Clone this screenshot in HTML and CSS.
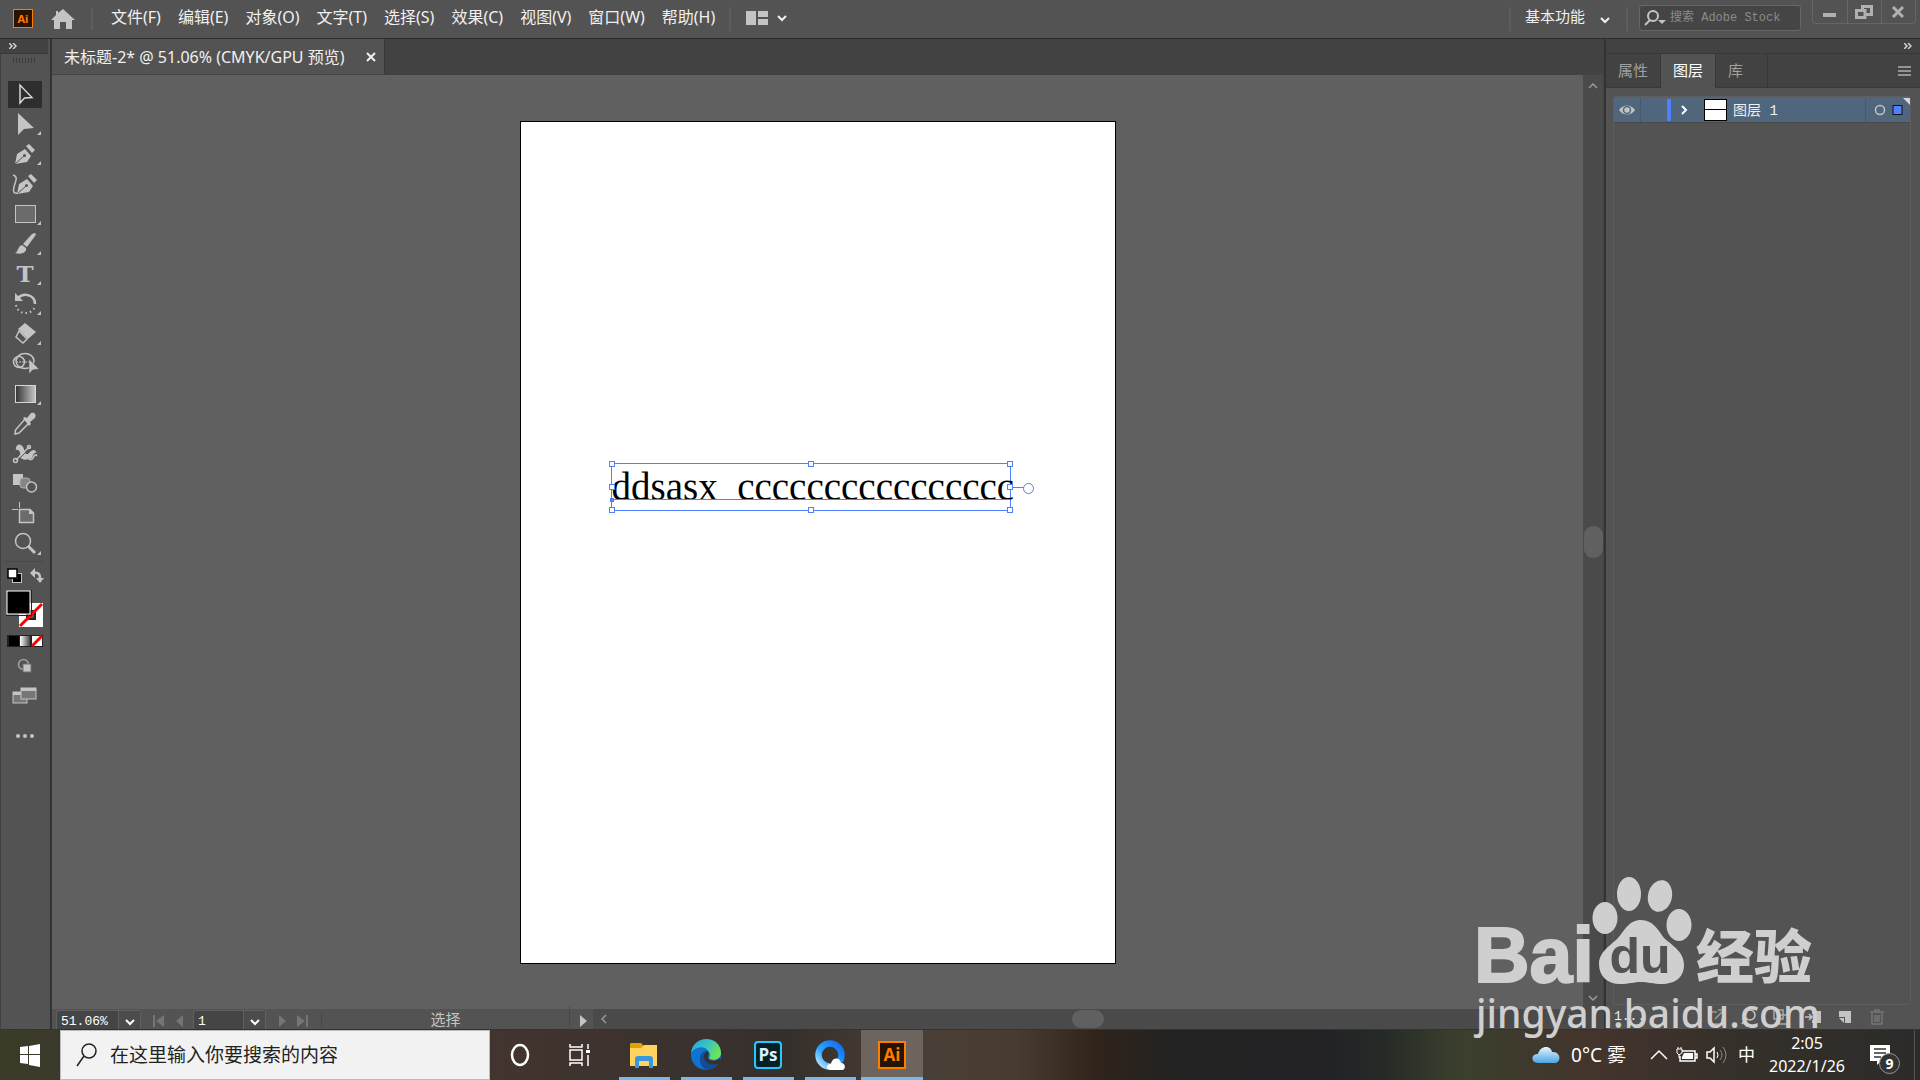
FILE: index.html
```html
<!DOCTYPE html>
<html lang="zh-CN">
<head>
    <meta charset="UTF-8">
    <meta name="viewport" content="width=device-width, initial-scale=1.0">
    <title>未标题-2</title>
    <link rel="stylesheet" href="styles.css">
</head>
<body>

    <header class="menuBar">
        <span class="aiLogo">Ai</span>
        <button class="home" aria-label="主页">
            <svg width="24" height="22"><path d="M12 1L24 12H21V21H15V14H9V21H3V12H0L5 7V3H7V5Z" fill="#c4c4c4"/></svg>
        </button>
        <nav class="menu">
            <button>文件(F)</button>
            <button>编辑(E)</button>
            <button>对象(O)</button>
            <button>文字(T)</button>
            <button>选择(S)</button>
            <button>效果(C)</button>
            <button>视图(V)</button>
            <button>窗口(W)</button>
            <button>帮助(H)</button>
        </nav>
        <button class="arrange" aria-label="排列文档">
            <svg width="42" height="16"><path d="M0 1H10V15H0ZM12 1H22V7H12ZM12 9H22V15H12Z" fill="#c4c4c4"/><path d="M32 6L36 10L40 6" fill="none" stroke="#f0f0f0" stroke-width="2"/></svg>
        </button>
        <label class="workspace">
            <select aria-label="工作区"><option>基本功能</option></select>
            <svg width="12" height="12"><path d="M2 5L6 9L10 5" fill="none" stroke="#f0f0f0" stroke-width="2"/></svg>
        </label>
        <label class="stock">
            <svg width="22" height="16"><circle cx="9" cy="6" r="5" fill="none" stroke="#c4c4c4" stroke-width="2"/><path d="M6 10L1 15" stroke="#c4c4c4" stroke-width="2"/><path d="M14 10H22L18 14Z" fill="#c4c4c4"/></svg>
            <input type="text" placeholder="搜索 Adobe Stock" aria-label="搜索 Adobe Stock">
        </label>
        <div class="winCtrl">
            <button aria-label="最小化"><svg width="18" height="16"><path d="M3 9H16V13H3Z" fill="#b0b0b0"/></svg></button>
            <button aria-label="还原"><svg width="18" height="16"><path d="M7.500 2.500H16.500V10.500H7.500Z" fill="none" stroke="#b0b0b0" stroke-width="3"/><path d="M1.500 6.500H10V13.500H1.500Z" fill="#535353" stroke="#b0b0b0" stroke-width="3"/></svg></button>
            <button aria-label="关闭"><svg width="18" height="16"><path d="M4 3L14 13M14 3L4 13" stroke="#b0b0b0" stroke-width="3"/></svg></button>
        </div>
    </header>

    <main class="workArea">
        <aside class="tools">
            <div class="panelTop"><svg width="8" height="6"><path d="M0 0L3 3L0 6M4 0L7 3L4 6" fill="none" stroke="#d0d0d0" stroke-width="1.500"/></svg></div>
            <div class="grip"></div>
            <button class="tool active" aria-label="选择工具"><svg width="40" height="30"><path d="M15 6V24L19.500 19L27 18.500Z" fill="none" stroke="#d6d6d6" stroke-width="1.500"/></svg></button>
            <button class="tool" aria-label="直接选择工具"><svg width="40" height="30"><path d="M13 4V26L19 20L29 19Z"/><path class="more" d="M32 26H36V22Z"/></svg></button>
            <button class="tool" aria-label="钢笔工具"><svg width="40" height="30"><path d="M10 25L12 15L20 10L26 17L22 23Z"/><path d="M21 7L24 5L30 11L27 14Z"/><path d="M10 25L19 17" stroke="#535353"/><circle cx="19.500" cy="16.500" r="1.500" fill="#535353"/><path class="more" d="M32 26H36V22Z"/></svg></button>
            <button class="tool" aria-label="曲率工具"><svg width="40" height="30"><path d="M12 25L14 15L22 10L28 17L24 23Z"/><path d="M23 7L26 5L32 11L29 14Z"/><path d="M12 25L21 17" stroke="#535353"/><circle cx="21.500" cy="16.500" r="1.500" fill="#535353"/><path class="ln" d="M8 6C14 8 10 13 9 18C8 22 8 25 13 24"/></svg></button>
            <button class="tool" aria-label="矩形工具"><svg width="40" height="30"><rect x="10.500" y="6.500" width="20" height="17" fill="#6c6c6c" stroke="#c4c4c4"/><path class="more" d="M32 26H36V22Z"/></svg></button>
            <button class="tool" aria-label="画笔工具"><svg width="40" height="30"><path d="M30 4C31 5 31 6 30 7L22 18L18 15L27 5Z"/><path d="M17 16L21 19C22 23 17 26 10 24C14 22 12 18 17 16Z"/><path class="more" d="M32 26H36V22Z"/></svg></button>
            <button class="tool" aria-label="文字工具"><svg width="40" height="30"><text x="20" y="23" text-anchor="middle" class="typeT">T</text><path class="more" d="M32 26H36V22Z"/></svg></button>
            <button class="tool" aria-label="旋转工具"><svg width="40" height="30"><path d="M13 9C19 3 30 6 30 15" fill="none" stroke="#c4c4c4" stroke-width="2.500"/><path d="M10 4L18 12H10Z"/><path d="M11 16C13 27 28 26 30 17" fill="none" stroke="#c4c4c4" stroke-width="2" stroke-dasharray="1.500 3"/><path class="more" d="M32 26H36V22Z"/></svg></button>
            <button class="tool" aria-label="橡皮擦工具"><svg width="40" height="30"><path d="M20 4L31 13L23 20L13 10Z"/><path class="ln" d="M14 12L22 20L18 24L11 18Z"/><path class="more" d="M32 26H36V22Z"/></svg></button>
            <button class="tool" aria-label="形状生成器工具"><svg width="40" height="30"><circle class="ln" cx="14" cy="13" r="5.500"/><ellipse class="ln" cx="20" cy="12" rx="9" ry="7.500"/><path d="M11 13H24" stroke="#c4c4c4" stroke-dasharray="2 1"/><path d="M24 10V25L27.500 21L34 20Z" stroke="#535353" stroke-width=".5"/></svg></button>
            <button class="tool" aria-label="渐变工具"><svg width="40" height="30"><defs><linearGradient id="gr"><stop offset="0" stop-color="#333"/><stop offset="1" stop-color="#c8c8c8"/></linearGradient></defs><rect x="10.500" y="6.500" width="20" height="17" fill="url(#gr)" stroke="#d6d6d6"/><path class="more" d="M32 26H36V22Z"/></svg></button>
            <button class="tool" aria-label="吸管工具"><svg width="40" height="30"><path class="ln" d="M20 10L24 14L14 24L10 25L10.500 21Z"/><path d="M18 9L20 8L22 9L26 4C29 3 32 5 30 9L25 13L26 15L24 17Z"/></svg></button>
            <button class="tool" aria-label="操控变形工具"><svg width="40" height="30"><path d="M11 11C10 6 15 3 18 8C20 12 20 16 23 15C26 12 29 8 32 14C29 12 28 17 27 19C22 21 17 22 14 17C17 16 14 9 11 11Z"/><path class="ln" d="M11 21L24 8"/><circle class="ln" cx="10.500" cy="21.500" r="2"/><circle class="ln" cx="24" cy="8" r="1.500"/><path d="M15 19L23 11" stroke="#535353"/><path class="ln" d="M24 20C29 23 29 12 32 17"/></svg></button>
            <button class="tool" aria-label="混合工具"><svg width="40" height="30"><path d="M8 5H18V16H8Z"/><rect x="15" y="9" width="10" height="10" rx="3" fill="#858585" stroke="#b0b0b0"/><circle cx="26.500" cy="18" r="5" fill="#535353" stroke="#c4c4c4" stroke-width="1.500"/></svg></button>
            <button class="tool" aria-label="画板工具"><svg width="40" height="30"><path d="M14.500 10.500H25L28.500 14V23.500H14.500Z" fill="#6c6c6c" stroke="#c4c4c4" stroke-width="1.500"/><path d="M24 10V15H29Z"/><path d="M7 10.500H13M14.500 3V9" stroke="#c4c4c4"/></svg></button>
            <button class="tool" aria-label="缩放工具"><svg width="40" height="30"><circle cx="18" cy="12" r="7.500" fill="none" stroke="#c4c4c4" stroke-width="1.500"/><path d="M23 17L30 24" stroke="#c4c4c4" stroke-width="3"/><path class="more" d="M32 26H36V22Z"/></svg></button>

            <div class="swapRow">
                <button aria-label="默认填色和描边"><svg width="16" height="16"><rect x="5.500" y="5.500" width="9" height="9" fill="none" stroke="#c4c4c4" stroke-width="1"/><rect x="7.500" y="7.500" width="5" height="5" fill="none" stroke="#000" stroke-width="3"/><rect x="1" y="1" width="9" height="9" fill="#fff" stroke="#000" stroke-width="1.500"/></svg></button>
                <button aria-label="互换填色和描边"><svg width="16" height="16"><path d="M5 5C11 4 11 8 11 11" fill="none" stroke="#c4c4c4" stroke-width="2.500"/><path d="M6 0V10L1 5ZM7 10H15L11 15Z"/></svg></button>
            </div>
            <button class="fillStroke" aria-label="填色和描边">
                <svg width="38" height="38"><path d="M13 13H37V37H13Z" fill="#fff"/><path d="M21 21H29V29H21Z" fill="#535353" stroke="#222" stroke-width="2"/><path d="M14 36L36 14" stroke="#f00" stroke-width="3"/><rect x="1" y="1" width="23" height="23" fill="#000" stroke="#fff"/><path d="M0 25.500H25.500V0" fill="none" stroke="#222"/></svg>
            </button>
            <button class="paintKind" aria-label="颜色类型">
                <svg width="36" height="12"><defs><linearGradient id="wb"><stop offset="0" stop-color="#fff"/><stop offset="1" stop-color="#444"/></linearGradient></defs><path d="M0 0H36V12H0Z" fill="#222"/><path d="M2 1H12V11H2Z" fill="#000"/><path d="M13 1H23V11H13Z" fill="url(#wb)"/><path d="M25 1H35V11H25Z" fill="#fff"/><path d="M25 11L35 1" stroke="#f00" stroke-width="3"/></svg>
            </button>
            <button class="small" aria-label="绘图模式"><svg width="16" height="16"><circle cx="6.500" cy="6.500" r="5" fill="none" stroke="#a0a0a0" stroke-width="1.500"/><path d="M6 6H14V14H6Z" stroke="#707070"/></svg></button>
            <button class="small" aria-label="屏幕模式"><svg width="26" height="18"><rect x="1" y="5" width="14" height="11" fill="#777" stroke="#c4c4c4"/><rect x="9" y="1" width="15" height="11" fill="#777" stroke="#c4c4c4"/><path d="M9 1H24V4H9ZM1 5H9V8H1Z"/></svg></button>
            <button class="small dots" aria-label="编辑工具栏"><svg width="18" height="4"><circle cx="2" cy="2" r="2"/><circle cx="9" cy="2" r="2"/><circle cx="16" cy="2" r="2"/></svg></button>
        </aside>

        <section class="doc">
            <div class="tabs">
                <div class="docTab">
                    <span>未标题-2* @ 51.06% (CMYK/GPU 预览)</span>
                    <button aria-label="关闭文档"><svg width="10" height="10"><path d="M1 1L9 9M9 1L1 9" stroke="#f0f0f0" stroke-width="2"/></svg></button>
                </div>
            </div>
            <div class="view">
                <div class="canvas">
                    <div class="artboard">
                        <div class="textObj">
                            ddsasx&nbsp; cccccccccccccccc
                            <i class="handle tl"></i><i class="handle tc"></i><i class="handle tr"></i>
                            <i class="handle ml"></i><i class="handle mr"></i>
                            <i class="handle bl"></i><i class="handle bc"></i><i class="handle br"></i>
                            <i class="baseline"></i>
                            <i class="outPort"></i>
                        </div>
                    </div>
                </div>
                <div class="vScroll">
                    <svg width="10" height="6"><path d="M1 5L5 1L9 5"/></svg>
                    <span class="thumb"></span>
                    <svg width="10" height="6"><path d="M1 1L5 5L9 1"/></svg>
                </div>
            </div>
            <div class="status">
                <label class="statBox zoomBox">
                    <select aria-label="缩放"><option>51.06%</option></select>
                    <svg width="22" height="18"><path d="M7 9L11 13L15 9"/></svg>
                </label>
                <button class="nav first" aria-label="首项"><svg width="34" height="12"><path d="M0 0H2V12H0ZM11 0V12L3 6ZM30 0V12L23 6Z"/></svg></button>
                <label class="statBox pageBox">
                    <select aria-label="画板导航"><option>1</option></select>
                    <svg width="22" height="18"><path d="M7 9L11 13L15 9"/></svg>
                </label>
                <button class="nav last" aria-label="末项"><svg width="34" height="12"><path d="M1 0V12L8 6ZM19 0V12L27 6ZM28 0H30V12H28Z"/></svg></button>
                <span class="curTool">选择</span>
                <button class="play" aria-label="状态菜单"><svg width="8" height="12"><path d="M0 0V12L7 6Z"/></svg></button>
                <div class="hScroll">
                    <svg width="6" height="10"><path d="M5 1L1 5L5 9"/></svg>
                    <span class="thumb"></span>
                    <svg width="6" height="10"><path d="M1 1L5 5L1 9"/></svg>
                </div>
            </div>
        </section>

        <aside class="panel">
            <div class="panelTop right"><svg width="8" height="6"><path d="M0 0L3 3L0 6M4 0L7 3L4 6" fill="none" stroke="#d0d0d0" stroke-width="1.500"/></svg></div>
            <div class="panelTabs">
                <button>属性</button>
                <button class="on">图层</button>
                <button>库</button>
                <button class="burger" aria-label="面板菜单"><svg width="13" height="12"><path d="M0 2H13M0 6H13M0 10H13" stroke="#b0b0b0" stroke-width="1.500"/></svg></button>
            </div>
            <div class="layers">
                <div class="layer">
                    <svg class="eye" width="26" height="24"><path d="M5 12C9 6 17 6 21 12C17 18 9 18 5 12Z" fill="#c4c4c4"/><circle cx="13" cy="12" r="3.500" fill="#c4c4c4" stroke="#50667c" stroke-width="1.500"/></svg>
                    <span class="lock"></span>
                    <span class="color"></span>
                    <svg class="expand" width="33" height="24"><path d="M11 8L15 12L11 16" fill="none" stroke="#fff" stroke-width="2"/></svg>
                    <span class="preview"></span>
                    <span class="name">图层 1</span>
                    <svg class="target" width="45" height="24"><circle cx="14" cy="12" r="4.500" fill="none" stroke="#c4c4c4" stroke-width="1.500"/><rect x="27" y="7.500" width="9" height="9" fill="#4f80ff" stroke="#111"/><path d="M37 0H45V8Z" fill="#d8d8d8"/></svg>
                </div>
            </div>
            <div class="panelFoot">
                <span>1...</span>
                <button aria-label="收集以导出"><svg width="16" height="16"><path d="M8 3H1V15H13V9M6 10L14 2M9 1H15V7" fill="none" stroke="#999" stroke-width="1.500"/></svg></button>
                <button aria-label="定位对象"><svg width="16" height="16"><circle cx="9" cy="6" r="5" fill="none" stroke="#c4c4c4" stroke-width="1.500"/><path d="M5 10L1 15" stroke="#c4c4c4" stroke-width="2"/></svg></button>
                <button aria-label="剪切蒙版"><svg width="16" height="16"><path d="M1 1H10V10H1ZM6 6H15V15H6Z" fill="none" stroke="#aaa" stroke-width="1.500"/></svg></button>
                <button aria-label="新建子图层"><svg width="16" height="16"><path d="M7 2H16V14H7V11H10V5H7Z"/><path d="M0 8H7M4 5L7 8L4 11" fill="none" stroke="#c4c4c4" stroke-width="1.500"/></svg></button>
                <button aria-label="新建图层"><svg width="16" height="16"><path d="M2 2H14V14H8V8H2ZM2 9H7V14Z"/></svg></button>
                <button aria-label="删除"><svg width="16" height="16"><path d="M1 3H15M6 3V1H10V3M3 4V15H13V4M6 6V13M8 6V13M10 6V13" fill="none" stroke="#757575" stroke-width="1.500"/></svg></button>
            </div>
        </aside>
    </main>

    <footer class="taskbar">
        <button class="start" aria-label="开始"><svg width="20" height="24"><path d="M0 4L8 3V11H0ZM9 3L20 1V11H9ZM0 12H8V21L0 20ZM9 12H20V24L9 22Z" fill="#fff"/></svg></button>
        <label class="winSearch">
            <svg width="22" height="26"><circle cx="13" cy="9" r="7" fill="none" stroke="#222" stroke-width="1.500"/><path d="M8 14L1 24" stroke="#222" stroke-width="1.500"/></svg>
            <input type="text" placeholder="在这里输入你要搜索的内容" aria-label="在这里输入你要搜索的内容">
        </label>
        <div class="pinned">
            <button aria-label="Cortana"><svg width="20" height="24"><ellipse cx="10" cy="12" rx="8" ry="10" fill="none" stroke="#fff" stroke-width="2.500"/></svg></button>
            <button aria-label="任务视图"><svg width="22" height="24"><path d="M1 1V4H13V1M1 23V20H13V23M1 7H13V17H1ZM19 1V6M19 12V23" fill="none" stroke="#fff" stroke-width="1.500"/><path d="M17 7H21V10H17Z" fill="#fff"/></svg></button>
        </div>
        <button class="app" aria-label="文件资源管理器"><svg width="32" height="32"><path d="M2 5Q2 4 3 4H13L15 6V9H2Z" fill="#e2a000"/><path d="M2 9H13L16 6H29V27H2Z" fill="#ffd35c"/><path d="M7 29V20Q7 17 10 17H22Q25 17 25 20V29H21V22H11V29Z" fill="#3a97dd"/></svg></button>
        <button class="app" aria-label="Edge"><svg width="32" height="34"><defs><linearGradient id="eg" x1="0" y1="0" x2="1" y2=".5"><stop offset="0" stop-color="#2aa5e0"/><stop offset=".5" stop-color="#35c1c8"/><stop offset="1" stop-color="#6be35a"/></linearGradient></defs><circle cx="16" cy="17" r="15" fill="#1173d0"/><path d="M1 15C2 6 9 1 16 1C25 1 31 7 31 15C31 21 25 23 19 21C21 18 20 13 15 10C10 8 4 10 1 15Z" fill="url(#eg)"/><path d="M10 21C10 16 13 13 17 13C21 15 17 18 18 21C20 24 26 24 29 22C28 26 24 31 18 32C12 31 10 26 10 21Z" fill="#124d98"/><path d="M17 13C20 15 17 18 18 20C21 24 27 23 30 20L30 25C22 29 13 25 14 17Z" fill="#37312d"/></svg></button>
        <button class="app" aria-label="Photoshop"><span class="psIcon">Ps</span></button>
        <button class="app" aria-label="QQ浏览器"><svg width="32" height="32"><defs><linearGradient id="qq" x1="0" y1="1" x2="1" y2="0"><stop offset="0" stop-color="#bfe8ff"/><stop offset=".4" stop-color="#2da4ff"/><stop offset="1" stop-color="#116cf0"/></linearGradient></defs><circle cx="16" cy="16" r="11.500" fill="none" stroke="url(#qq)" stroke-width="6.500"/><path d="M17 31C11 31 12 24 17 25C18 18 26 18 27 24C32 24 32 31 28 31Z" fill="#fff"/></svg></button>
        <button class="app current" aria-label="Illustrator"><span class="aiIcon">Ai</span></button>

        <div class="tray">
            <button class="weather">
                <svg width="28" height="20"><defs><linearGradient id="cl" x1="0" y1="0" x2="0" y2="1"><stop offset="0" stop-color="#e4f4ff"/><stop offset="1" stop-color="#4ea6e4"/></linearGradient></defs><path d="M6 18C-2 18 -1 8 6 9C8 0 19 0 20 7C29 6 30 18 22 18Z" fill="url(#cl)"/></svg>
                <span>0°C 雾</span>
            </button>
            <button aria-label="显示隐藏的图标"><svg width="18" height="12"><path d="M1 10L9 2L17 10" fill="none" stroke="#fff" stroke-width="1.500"/></svg></button>
            <button aria-label="电池"><svg width="22" height="18"><path d="M6 5H19V15H4V10M19 8H21V12H19" fill="none" stroke="#fff" stroke-width="1.500"/><path d="M8 7H17V13H6V11Z" fill="#fff"/><path d="M1 3H6V7L3 9L1 7ZM2 1V3M5 1V3M3 8V12" fill="none" stroke="#fff"/></svg></button>
            <button aria-label="音量"><svg width="22" height="18"><path d="M1 6H4L8 2V16L4 12H1Z" fill="none" stroke="#fff" stroke-width="1.500"/><path d="M11 6Q13 9 11 12" fill="none" stroke="#fff"/><path d="M14 4Q18 9 14 14M17 1Q23 9 17 17" fill="none" stroke="#8a8a8a"/></svg></button>
            <button class="ime">中</button>
            <button class="clock"><time>2:05</time><time>2022/1/26</time></button>
            <button class="notice" aria-label="通知"><svg width="22" height="22"><path d="M1 1H21V17H12L8 21V17H1Z" fill="#fff"/><path d="M5 5H17M5 9H17M5 13H12" stroke="#333" stroke-width="1.500"/></svg><span class="badge">9</span></button>
        </div>
    </footer>

    <!-- site mark over the corner -->
    <svg class="mark" width="360" height="176" viewBox="0 0 360 176">
        <g fill="#cfcfcf">
            <text x="2" y="112" class="markBai">Bai</text>
            <ellipse cx="133" cy="48" rx="12.500" ry="16"/>
            <ellipse cx="157" cy="24" rx="12" ry="17"/>
            <ellipse cx="188" cy="26" rx="12" ry="16" transform="rotate(12 188 26)"/>
            <ellipse cx="207" cy="55" rx="12.500" ry="16"/>
            <path d="M169 50C181 50 186 60 192 68C201 76 212 82 212 95C212 108 202 114 190 114C181 114 176 112 169 112C162 112 157 114 148 114C135 114 127 106 127 94C127 82 138 76 146 68C153 60 157 50 169 50Z"/>
            <text x="224" y="108" class="markCn">经验</text>
            <text x="4" y="158" class="markUrl">jingyan.baidu.com</text>
        </g>
        <text x="168" y="103" text-anchor="middle" class="markDu" fill="#535353">du</text>
    </svg>

</body>
</html>
```
FILE: styles.css
```css
* {
    box-sizing: border-box;
}
body {
    margin: 0;
    height: 100vh;
    display: flex;
    flex-direction: column;
    overflow: hidden;
    position: relative;
    background: #535353;
    color: #f0f0f0;
    font: 15px/20px "Noto Sans", "Noto Sans CJK SC", sans-serif;
}
button, select, input {
    margin: 0;
    padding: 0;
    border: 0;
    background: none;
    color: inherit;
    font: inherit;
    outline: none;
    -webkit-appearance: none;
    appearance: none;
}
svg {
    display: block;
    flex: none;
}

/* menu bar */
.menuBar {
    height: 39px;
    flex: none;
    display: flex;
    align-items: center;
    border-bottom: 1px solid #2c2c2c;
    padding: 0 4px 0 13px;
}
.aiLogo {
    width: 20px;
    height: 19px;
    margin-bottom: 2px;
    border: 1px solid #ff7c00;
    background: #2a1400;
    color: #ff7c00;
    font: bold 11px/17px "Open Sans", sans-serif;
    text-align: center;
}
.home {
    margin-left: 18px;
    padding-right: 16px;
    border-right: 2px solid #5e5e5e;
}
.menu {
    display: flex;
    gap: 17px;
    padding: 0 14px 4px 18px;
    border-right: 2px solid #5e5e5e;
    font-size: 16px;
}
.menu button {
    white-space: nowrap;
}
.arrange {
    margin: 0 auto 2px 15px;
}
.workspace {
    display: flex;
    align-items: center;
    gap: 13px;
    height: 24px;
    padding: 0 15px 0 14px;
    border: solid #5e5e5e;
    border-width: 0 2px;
}
.workspace select {
    padding-bottom: 6px;
}
.stock {
    width: 162px;
    height: 26px;
    margin: 0 11px 2px;
    display: flex;
    align-items: center;
    gap: 4px;
    padding-left: 4px;
    background: #454545;
    border: 1px solid #666;
    border-radius: 3px;
}
.stock input {
    flex: 1;
    min-width: 0;
    font: 12px/18px "Liberation Mono", "Noto Sans CJK SC", monospace;
}
.stock input::placeholder {
    color: #8b8b8b;
}
.winCtrl {
    display: flex;
    align-self: flex-start;
    border: 1px solid #666;
    border-top: 0;
    border-radius: 0 0 4px 4px;
}
.winCtrl button {
    width: 34px;
    height: 23px;
    padding-left: 7px;
}
.winCtrl button + button {
    border-left: 1px solid #666;
}

/* work area */
.workArea {
    flex: 1;
    min-height: 0;
    display: flex;
    border-bottom: 1px solid #333;
}
.panelTop {
    height: 15px;
    flex: none;
    align-self: stretch;
    padding: 4px 8px;
    background: #424242;
    border-bottom: 1px solid #383838;
}
.panelTop.right {
    display: flex;
    justify-content: flex-end;
}

/* tools */
.tools {
    width: 52px;
    flex: none;
    display: flex;
    flex-direction: column;
    align-items: center;
    padding-right: 2px;
    border-left: 1px solid #404040;
    border-right: 2px solid #333;
}
.grip {
    width: 24px;
    height: 5px;
    margin: 4px 0 16px;
    background: repeating-linear-gradient(90deg, #3a3a3a 0 1px, #535353 1px 3px);
}
.tools svg {
    fill: #c4c4c4;
}
.tools .ln {
    fill: none;
    stroke: #c4c4c4;
    stroke-width: 1.5px;
}
.tool {
    height: 30px;
}
.tool.active {
    background: linear-gradient(#2e2e2e, #2e2e2e) center / 34px 27px no-repeat;
}
.typeT {
    font: bold 23px "DejaVu Serif", serif;
}
.swapRow {
    width: 40px;
    height: 28px;
    display: flex;
    justify-content: space-between;
    align-items: center;
    margin-top: 2px;
    padding-left: 2px;
    border-top: 1px solid #4a4a4a;
}
.fillStroke {
    margin-top: 1px;
}
.paintKind {
    margin: 7px 0 4px;
}
.small {
    height: 30px;
}
.dots {
    margin-top: 10px;
}

/* document */
.doc {
    flex: 1;
    min-width: 0;
    display: flex;
    flex-direction: column;
}
.tabs {
    height: 36px;
    flex: none;
    display: flex;
    background: #424242;
}
.docTab {
    display: flex;
    align-items: center;
    gap: 21px;
    padding: 0 8px 0 12px;
    background: #535353;
    border-right: 1px solid #3a3a3a;
    border-bottom: 1px solid #444;
    font-size: 16px;
}
.view {
    flex: 1;
    min-height: 0;
    display: flex;
}
.canvas {
    flex: 1;
    display: flex;
    align-items: center;
    justify-content: center;
    background: #606060;
    overflow: hidden;
}
.artboard {
    width: 596px;
    height: 843px;
    flex: none;
    position: relative;
    background: #fff;
    border: 1px solid #000;
}
.vScroll {
    width: 21px;
    display: flex;
    flex-direction: column;
    align-items: center;
    justify-content: space-between;
    padding: 8px 0;
    background: #4a4a4a;
    border-right: 1px solid #444;
}
.vScroll svg, .hScroll svg {
    fill: none;
    stroke: #999;
    stroke-width: 1.5px;
}
.thumb {
    width: 19px;
    height: 32px;
    border-radius: 9px;
    background: #606060;
}

/* selected text object, placed freely on the artboard */
.textObj {
    position: absolute;
    left: 90px;
    top: 341px;
    width: 400px;
    height: 48px;
    border: 1px solid #4f80ff;
    color: #000;
    font: 39px/46px "Liberation Serif", serif;
    white-space: nowrap;
}
.handle {
    position: absolute;
    width: 6px;
    height: 6px;
    margin: -3px;
    background: #fff;
    border: 1px solid #4f80ff;
}
.tl, .tc, .tr { top: 0; }
.ml, .mr { top: 50%; }
.bl, .bc, .br { top: 100%; }
.tl, .ml, .bl { left: 0; }
.tc, .bc { left: 50%; }
.tr, .mr, .br { left: 100%; }
.baseline {
    position: absolute;
    left: 0;
    right: 0;
    top: 35px;
    height: 1px;
    background: #4f80ff;
}
.baseline::before {
    content: "";
    position: absolute;
    left: -2px;
    top: -1px;
    width: 4px;
    height: 4px;
    background: #4f80ff;
}
.outPort {
    position: absolute;
    left: 100%;
    top: 50%;
    width: 14px;
    margin-left: 3px;
    border-top: 1px solid #4f80ff;
}
.outPort::after {
    content: "";
    position: absolute;
    left: 10px;
    top: -5px;
    width: 9px;
    height: 9px;
    background: #fff;
    border: 1px solid #4f80ff;
    border-radius: 50%;
}

/* status bar */
.status {
    height: 20px;
    flex: none;
    display: flex;
    align-items: center;
    padding-left: 4px;
    font: 13px/18px "Liberation Mono", "Noto Sans CJK SC", monospace;
}
.statBox {
    height: 19px;
    display: flex;
    background: #454545;
    border: 1px solid #606060;
    border-bottom: 0;
    border-radius: 3px 3px 0 0;
}
.statBox select {
    flex: 1;
    min-width: 0;
    padding: 2px 0 0 4px;
    color: #fff;
}
.statBox svg {
    background: #4c4c4c;
    border-left: 1px solid #606060;
    fill: none;
    stroke: #fff;
    stroke-width: 2px;
}
.zoomBox {
    width: 85px;
}
.pageBox {
    width: 73px;
}
.nav {
    padding: 3px 6px 0 12px;
}
.nav svg {
    fill: #757575;
}
.last {
    padding-right: 9px;
    border-right: 1px solid #484848;
}
.curTool {
    width: 248px;
    padding-top: 6px;
    text-align: center;
    font-size: 15px;
    color: #c4c4c4;
    border-right: 1px solid #484848;
}
.play {
    padding: 3px 5px 0 10px;
}
.play svg {
    fill: #c4c4c4;
}
.hScroll {
    flex: 1;
    align-self: stretch;
    display: flex;
    align-items: center;
    justify-content: space-between;
    padding: 0 30px 0 8px;
    background: #4a4a4a;
}
.hScroll .thumb {
    width: 32px;
    height: 18px;
}

/* layers panel */
.panel {
    width: 316px;
    flex: none;
    display: flex;
    flex-direction: column;
    border-left: 2px solid #333;
}
.panelTabs {
    height: 34px;
    flex: none;
    display: flex;
    background: #424242;
}
.panelTabs button {
    padding: 0 12px 2px;
    color: #a0a0a0;
    border-right: 1px solid #383838;
    border-bottom: 1px solid #383838;
}
.panelTabs .on {
    color: #fff;
    background: #535353;
    border-bottom-color: #535353;
}
.panelTabs button:nth-child(3) {
    padding-right: 24px;
}
.panelTabs .burger {
    flex: 1;
    display: flex;
    align-items: center;
    justify-content: flex-end;
    padding: 0 9px 0 0;
    border-right: 0;
}
.layers {
    flex: 1;
    margin: 8px 9px 0 7px;
    border: 1px solid #5e5e5e;
    border-radius: 3px;
}
.layer {
    height: 26px;
    display: flex;
    align-items: center;
    background: #50667c;
    border-bottom: 1px solid #484848;
}
.lock {
    width: 27px;
    height: 24px;
    border-left: 1px solid #485a6c;
}
.color {
    width: 4px;
    height: 22px;
    background: #4f80ff;
}
.preview {
    width: 23px;
    height: 22px;
    border: 1px solid #000;
    background: linear-gradient(#000, #000) center / 100% 1px no-repeat #fff;
}
.name {
    flex: 1;
    padding: 3px 0 0 6px;
    font: 14px/20px "Liberation Mono", "Noto Sans CJK SC", monospace;
}
.target {
    border-left: 1px solid #485a6c;
}
.panelFoot {
    height: 24px;
    flex: none;
    display: flex;
    align-items: center;
    gap: 16px;
    padding: 0 35px 0 8px;
    font: 13px/18px "Liberation Mono", monospace;
}
.panelFoot span {
    margin-right: auto;
}
.panelFoot svg {
    fill: #c4c4c4;
}

/* taskbar */
.taskbar {
    height: 50px;
    flex: none;
    display: flex;
    background: linear-gradient(90deg, #3a3b29 0, #3c3a2b 4%, #43342e 25%, #3a322e 36%, #352f2b 41%, #4a3f36 48%, #483c32 53%, #30241b 57%, #222 61%, #222226 69%, #252a27 72%, #3b402d 76%, #3e3a2c 79%, #44342c 83%, #35302a 90%, #2c2b29 100%);
    color: #fff;
}
.start {
    width: 60px;
    flex: none;
    padding-left: 20px;
}
.winSearch {
    width: 430px;
    display: flex;
    align-items: center;
    gap: 12px;
    padding: 0 15px;
    background: #f2f2f2;
    border: 1px solid #bbb;
}
.winSearch input {
    flex: 1;
    min-width: 0;
    font-size: 19px;
    line-height: 28px;
}
.winSearch input::placeholder {
    color: #222;
}
.pinned {
    display: flex;
    padding-right: 3px;
}
.pinned button, .app {
    width: 62px;
    flex: none;
    display: flex;
    align-items: center;
    justify-content: center;
}
.pinned button {
    width: 60px;
}
.app {
    background: linear-gradient(#76b9ed, #76b9ed) bottom / 51px 3px no-repeat;
}
.app.current {
    background: linear-gradient(#76b9ed, #76b9ed) bottom / 100% 3px no-repeat #6d645e;
}
.psIcon, .aiIcon {
    width: 28px;
    height: 28px;
    font: bold 17px/24px "Open Sans", sans-serif;
}
.psIcon {
    border: 2px solid #26c9ff;
    border-radius: 4px;
    background: #061e26;
    color: #d5f2ff;
}
.aiIcon {
    border: 2px solid #ff7c00;
    background: #261300;
    color: #ff7c00;
}
.tray {
    margin-left: auto;
    display: flex;
    align-items: center;
    gap: 8px;
    padding-right: 5px;
    border-right: 1px solid #555;
    margin-right: 5px;
}
.weather {
    display: flex;
    align-items: center;
    gap: 11px;
    padding-right: 16px;
    font-size: 19px;
}
.ime {
    font-size: 17px;
    padding: 0 2px;
}
.clock {
    width: 84px;
    display: flex;
    flex-direction: column;
    font-size: 16px;
    line-height: 23px;
    text-align: center;
}
.notice {
    position: relative;
    padding: 0 18px 0 12px;
}
.badge {
    position: absolute;
    right: 9px;
    top: 9px;
    width: 21px;
    height: 21px;
    border: 1px solid #999;
    border-radius: 50%;
    background: #333;
    font: bold 14px/19px "Noto Sans", sans-serif;
    text-align: center;
}

.mark {
    position: absolute;
    right: 88px;
    bottom: 34px;
    pointer-events: none;
}
.markBai {
    font: bold 77px "Liberation Sans", sans-serif;
    stroke: #cfcfcf;
    stroke-width: 2px;
}
.markDu {
    font: bold 50px "Liberation Sans", sans-serif;
}
.markCn {
    font: 900 58px "Noto Sans CJK SC", sans-serif;
}
.markUrl {
    font: 500 39px "Noto Sans", sans-serif;
}
```
